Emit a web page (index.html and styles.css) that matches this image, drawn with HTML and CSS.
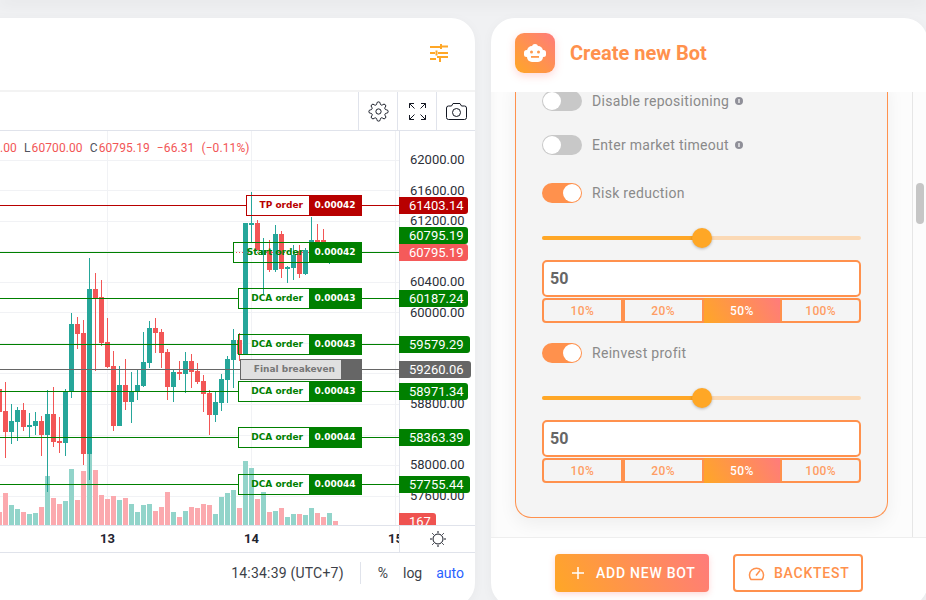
FILE: index.html
```html
<!DOCTYPE html>
<html lang="en">
<head>
    <meta charset="UTF-8">
    <meta name="viewport" content="width=device-width, initial-scale=1.0">
    <title>Create new Bot</title>
    <link rel="stylesheet" href="styles.css">
</head>
<body>

    <div class="topbar"></div>

    <div class="layout">

        <!-- Chart card -->
        <section class="card chart-card">
            <header class="chart-head">
                <svg class="tune-icon" width="18" height="18" viewBox="0 0 18 18" fill="none" stroke="#ffa726" stroke-width="2">
                    <path d="M0 3h10M11 0v5M11 2.5h7M0 9h5M6.5 6.5v5M8 9h10M0 15h6M7 13h11M10 13v5"/>
                </svg>
            </header>

            <div class="toolbar">
                <button class="tool">
                    <svg width="21" height="21" viewBox="0 0 24 24" fill="none" stroke="#131722" stroke-width="1.1">
                        <circle cx="12" cy="12" r="3"/>
                        <path d="M19.4 15a1.65 1.65 0 0 0 .33 1.82l.06.06a2 2 0 0 1 0 2.83 2 2 0 0 1-2.83 0l-.06-.06a1.65 1.65 0 0 0-1.82-.33 1.65 1.65 0 0 0-1 1.51V21a2 2 0 0 1-2 2 2 2 0 0 1-2-2v-.09A1.65 1.65 0 0 0 9 19.4a1.65 1.65 0 0 0-1.82.33l-.06.06a2 2 0 0 1-2.83 0 2 2 0 0 1 0-2.83l.06-.06a1.65 1.65 0 0 0 .33-1.82 1.65 1.65 0 0 0-1.51-1H3a2 2 0 0 1-2-2 2 2 0 0 1 2-2h.09A1.65 1.65 0 0 0 4.6 9a1.65 1.65 0 0 0-.33-1.82l-.06-.06a2 2 0 0 1 0-2.83 2 2 0 0 1 2.83 0l.06.06a1.65 1.65 0 0 0 1.82.33H9a1.65 1.65 0 0 0 1-1.51V3a2 2 0 0 1 2-2 2 2 0 0 1 2 2v.09a1.65 1.65 0 0 0 1 1.51 1.65 1.65 0 0 0 1.82-.33l.06-.06a2 2 0 0 1 2.83 0 2 2 0 0 1 0 2.83l-.06.06a1.65 1.65 0 0 0-.33 1.82V9a1.65 1.65 0 0 0 1.51 1H21a2 2 0 0 1 2 2 2 2 0 0 1-2 2h-.09a1.65 1.65 0 0 0-1.51 1z"/>
                    </svg>
                </button>
                <button class="tool">
                    <svg width="17" height="17" viewBox="0 0 17 17" fill="none" stroke="#131722">
                        <path d="M.5 5V.5H5M.5.5L5.5 5.5M16.5 5V.5H12M16.5.5L11.5 5.5M.5 12v4.5H5M.5 16.5L5.5 11.5M16.5 12v4.5H12M16.5 16.5L11.5 11.5"/>
                    </svg>
                </button>
                <button class="tool">
                    <svg width="21" height="17" viewBox="0 0 21 17" fill="none" stroke="#131722">
                        <path d="M.5 5a2 2 0 0 1 2-2h3L7 .5h7L15.500 3h3a2 2 0 0 1 2 2v9.500a2 2 0 0 1-2 2h-16a2 2 0 0 1-2-2z"/>
                        <circle cx="10.500" cy="9.500" r="4"/>
                    </svg>
                </button>
            </div>

            <div class="chart">
                <svg class="plot" width="399" height="394" viewBox="0 131 399 394" fill="none">
                    <path class="grid" d="M0 160.500H399M0 190.500H399M0 221.500H399M0 251.500H399M0 282.500H399M0 312.500H399M0 343.500H399M0 373.500H399M0 404.500H399M0 435.500H399M0 465.500H399M0 496.500H399M107.500 131V525M251.500 131V525M395.500 131V525"/>
                    <path class="price-now" d="M233 252.500H399"/>
                    <!-- volume -->
                    <path class="vol vol-up" d="M11.500 505V525M17.500 509V525M29.500 514V525M35.500 513V525M47.500 476V525M65.500 501V525M71.500 469V525M89.500 454V525M119.500 500V525M131.500 504V525M137.500 512V525M143.500 505V525M149.500 504V525M173.500 512V525M185.500 511V525M215.500 514V525M221.500 497V525M227.500 493V525M233.500 490V525M245.500 461V525M251.500 468V525M263.500 492V525M275.500 511V525M287.500 517V525M293.500 514V525M305.500 515V525M311.500 508V525M329.500 513V525"/>
                    <path class="vol vol-down" d="M-.5 512V525M5.500 493V525M23.500 512V525M41.500 507V525M53.500 498V525M59.500 504V525M77.500 500V525M83.500 471V525M95.500 470V525M101.500 495V525M107.500 499V525M113.500 496V525M125.500 498V525M155.500 511V525M161.500 507V525M167.500 492V525M179.500 517V525M191.500 507V525M197.500 508V525M203.500 504V525M209.500 505V525M239.500 508V525M257.500 499V525M269.500 512V525M281.500 508V525M299.500 514V525M317.500 513V525M323.500 517V525M335.500 521V525"/>
                    <!-- wicks -->
                    <path class="wick wick-up" d="M11.500 404V444M17.500 407V441M29.500 413V437M35.500 412V435M47.500 390V492M65.500 389V456M71.500 313V398M89.500 258V480M119.500 366V426M131.500 372V423M137.500 370V400M143.500 332V387M149.500 321V368M173.500 369V402M185.500 352V393M215.500 392V422M221.500 374V411M227.500 356V403M233.500 329V388M251.500 192V243M263.500 238V295M275.500 225V272M287.500 266V283M293.500 245V280M305.500 248V275M311.500 217V253M329.500 255V264"/>
                    <path class="wick wick-down" d="M-.5 380V400M5.500 382V458M23.500 403V431M41.500 416V456M53.500 387V447M59.500 417V453M77.500 317V349M83.500 320V465M95.500 273V371M101.500 280V346M107.500 318V368M113.500 351V431M125.500 359V410M155.500 318V353M161.500 329V368M167.500 349V400M179.500 361V380M191.500 354V388M197.500 363V384M203.500 375V412M209.500 390V435M239.500 333V361M257.500 220V250M269.500 240V272M281.500 231V278M299.500 245V278M317.500 224V260M323.500 229V263"/>
                    <!-- bodies -->
                    <path class="body body-up" d="M11.500 421V432M17.500 410V422M29.500 425V427M35.500 421V426M47.500 414V435M65.500 392V443M71.500 324V391M89.500 289V454M119.500 385V426M131.500 392V402M137.500 385V392M143.500 362V386M149.500 328V363M173.500 372V387M185.500 361V374M215.500 402V415M221.500 379V403M227.500 359V380M233.500 340V360M245.500 223V354M251.500 223V225M263.500 250V255M275.500 234V270M287.500 267V269M293.500 255V268M305.500 250V274M311.500 240V253"/>
                    <path class="body body-down" d="M-.5 389V412M5.500 411V432M23.500 410V427M41.500 421V435M53.500 414V442M59.500 441V443M77.500 324V334M83.500 333V454M95.500 289V298M101.500 297V343M107.500 342V367M113.500 366V426M125.500 385V402M155.500 328V333M161.500 332V353M167.500 352V387M179.500 372V374M191.500 361V372M197.500 371V382M203.500 381V394M209.500 393V415M239.500 340V354M257.500 223V250M269.500 250V270M281.500 234V269M299.500 251V274M317.500 240V242M323.500 240V252"/>
                </svg>

                <div class="legend">
                    <span class="down">.00</span>
                    <span><i>L</i><span class="down">60700.00</span></span>
                    <span><i>C</i><span class="down">60795.19</span></span>
                    <span class="down">−66.31</span>
                    <span class="down">(−0.11%)</span>
                </div>

                <div class="price-axis">
                    <span>62000.00</span>
                    <span>61600.00</span>
                    <span>61200.00</span>
                    <span>60800.00</span>
                    <span>60400.00</span>
                    <span>60000.00</span>
                    <span>59600.00</span>
                    <span>59200.00</span>
                    <span>58800.00</span>
                    <span>58400.00</span>
                    <span>58000.00</span>
                    <span>57600.00</span>
                </div>

                <!-- top is the y of each price level -->
                <div class="level" style="top:64px">
                    <span class="wire wire-red"></span>
                    <div class="order order-tp"><span class="order-name">TP order</span><span class="order-qty">0.00042</span></div>
                    <span class="wire wire-end wire-red"></span>
                    <div class="slot"><span class="tag tag-red">61403.14</span></div>
                </div>
                <div class="level" style="top:111px">
                    <span class="wire"></span>
                    <div class="order order-start"><span class="order-name">Start order</span><span class="order-qty">0.00042</span></div>
                    <span class="wire wire-end"></span>
                    <div class="slot"><span class="tag tag-now">60795.19</span></div>
                </div>
                <div class="level" style="top:157px">
                    <span class="wire"></span>
                    <div class="order"><span class="order-name">DCA order</span><span class="order-qty">0.00043</span></div>
                    <span class="wire wire-end"></span>
                    <div class="slot"><span class="tag">60187.24</span></div>
                </div>
                <div class="level" style="top:203px">
                    <span class="wire"></span>
                    <div class="order"><span class="order-name">DCA order</span><span class="order-qty">0.00043</span></div>
                    <span class="wire wire-end"></span>
                    <div class="slot"><span class="tag tag-wide">59579.29</span></div>
                </div>
                <div class="level" style="top:228px">
                    <span class="wire wire-grey"></span>
                    <div class="order order-even"><span class="order-name">Final breakeven</span><span class="order-qty"></span></div>
                    <span class="wire wire-end wire-grey"></span>
                    <div class="slot"><span class="tag tag-grey">59260.06</span></div>
                </div>
                <div class="level" style="top:250px">
                    <span class="wire"></span>
                    <div class="order"><span class="order-name">DCA order</span><span class="order-qty">0.00043</span></div>
                    <span class="wire wire-end"></span>
                    <div class="slot"><span class="tag">58971.34</span></div>
                </div>
                <div class="level" style="top:296px">
                    <span class="wire"></span>
                    <div class="order"><span class="order-name">DCA order</span><span class="order-qty">0.00044</span></div>
                    <span class="wire wire-end"></span>
                    <div class="slot"><span class="tag tag-wide">58363.39</span></div>
                </div>
                <div class="level" style="top:343px">
                    <span class="wire"></span>
                    <div class="order"><span class="order-name">DCA order</span><span class="order-qty">0.00044</span></div>
                    <span class="wire wire-end"></span>
                    <div class="slot"><span class="tag tag-wide">57755.44</span></div>
                </div>

                <span class="tag tag-last">60795.19</span>
                <div class="tag-volume"><span>167</span></div>
            </div>

            <div class="time-axis">
                <span class="day day-13">13</span>
                <span class="day day-14">14</span>
                <span class="day day-15">15</span>
                <div class="theme">
                    <svg width="16" height="16" viewBox="0 0 16 16" fill="none" stroke="#131722">
                        <circle cx="8" cy="8" r="5"/>
                        <path d="M8 0v2M8 14v2M0 8h2M14 8h2M2.300 2.300l1.400 1.400M12.300 12.300l1.400 1.400M13.700 2.300l-1.400 1.400M3.700 12.300l-1.400 1.400"/>
                    </svg>
                </div>
            </div>

            <footer class="chart-foot">
                <span class="clock">14:34:39 (UTC+7)</span>
                <span class="foot-sep"></span>
                <span class="foot-opt foot-pct">%</span>
                <span class="foot-opt">log</span>
                <span class="foot-opt foot-auto">auto</span>
            </footer>
        </section>

        <!-- Bot form -->
        <section class="card bot-card">
            <header class="bot-head">
                <div class="bot-logo">
                    <svg width="22" height="18" viewBox="0 0 22 18">
                        <circle cx="11" cy="3" r="3" fill="#fff"/>
                        <rect x="3" y="2" width="16" height="16" rx="5" fill="#fff"/>
                        <rect y="6" width="5" height="7" rx="2.500" fill="#fff"/>
                        <rect x="17" y="6" width="5" height="7" rx="2.500" fill="#fff"/>
                        <circle cx="7.500" cy="8" r="1.500" fill="#ff9a4d"/>
                        <circle cx="14.500" cy="8" r="1.500" fill="#ff9a4d"/>
                        <rect x="7" y="12" width="8" height="1.800" fill="#ff9a4d"/>
                    </svg>
                </div>
                <h2>Create new Bot</h2>
            </header>

            <div class="bot-body">
                <div class="bot-scroll">
                    <div class="panel">
                        <div class="switch-row">
                            <span class="switch"></span>
                            <label>Disable repositioning</label>
                            <svg class="info" width="8" height="8" viewBox="0 0 8 8"><circle cx="4" cy="4" r="4" fill="#8f8f98"/><path d="M4 2v4" stroke="#fff" stroke-width="1.200"/></svg>
                        </div>
                        <div class="switch-row switch-second">
                            <span class="switch"></span>
                            <label>Enter market timeout</label>
                            <svg class="info" width="8" height="8" viewBox="0 0 8 8"><circle cx="4" cy="4" r="4" fill="#8f8f98"/><path d="M4 2v4" stroke="#fff" stroke-width="1.200"/></svg>
                        </div>

                        <div class="switch-row switch-third">
                            <span class="switch on"></span>
                            <label>Risk reduction</label>
                        </div>
                        <div class="slider"><span class="slider-fill"></span><span class="slider-thumb"></span></div>
                        <input class="amount" type="text" value="50">
                        <div class="segments">
                            <button class="seg">10%</button>
                            <button class="seg">20%</button>
                            <button class="seg active">50%</button>
                            <button class="seg">100%</button>
                        </div>

                        <div class="switch-row switch-next">
                            <span class="switch on"></span>
                            <label>Reinvest profit</label>
                        </div>
                        <div class="slider"><span class="slider-fill"></span><span class="slider-thumb"></span></div>
                        <input class="amount" type="text" value="50">
                        <div class="segments">
                            <button class="seg">10%</button>
                            <button class="seg">20%</button>
                            <button class="seg active">50%</button>
                            <button class="seg">100%</button>
                        </div>
                    </div>
                </div>
                <div class="scrollbar"><span class="scroll-thumb"></span></div>
            </div>

            <footer class="bot-foot">
                <button class="btn btn-add">
                    <svg width="12" height="12" viewBox="0 0 12 12" stroke="#fff" stroke-width="1.500"><path d="M6 0v12M0 6h12"/></svg>
                    ADD NEW BOT
                </button>
                <button class="btn btn-test">
                    <svg width="17" height="15" viewBox="0 0 17 15" fill="none" stroke="#ff914d" stroke-width="1.500"><path d="M3 13.500a7 7 0 1 1 11 0zM8 9.500l4-5"/></svg>
                    BACKTEST
                </button>
            </footer>
        </section>

    </div>

</body>
</html>
```

FILE: styles.css
```css
/* General styles */
* {
    box-sizing: border-box;
}

body {
    font-family: Roboto, "Liberation Sans", sans-serif;
    margin: 0;
    height: 600px;
    overflow: hidden;
    background-color: #f0f1f3;
}

button {
    font-family: inherit;
    cursor: pointer;
}

.topbar {
    height: 0;
    box-shadow: 0 0 16px 2px rgba(0, 0, 0, 0.12);
}

.layout {
    display: flex;
    gap: 16px;
    padding-top: 18px;
    width: 952px;
    margin-left: -24px;
}

.card {
    height: 589px;
    background-color: #fff;
    border-radius: 24px;
    overflow: hidden;
    box-shadow: 0 2px 12px rgba(0, 0, 0, 0.04);
}

/* Chart card */
.chart-card {
    width: 499px;
    padding-left: 24px;
    flex-shrink: 0;
}

.chart-head {
    height: 74px;
    border-bottom: 2px solid #f3f3f3;
    display: flex;
    align-items: center;
    justify-content: flex-end;
    padding: 0 27px 2px 0;
}

.toolbar {
    height: 39px;
    border-bottom: 1px solid #e0e3eb;
    display: flex;
    justify-content: flex-end;
}

.tool {
    width: 39px;
    padding: 0;
    border: none;
    border-left: 1px solid #e0e3eb;
    background: none;
    display: flex;
    align-items: center;
    justify-content: center;
}

.tool:first-child {
    width: 39px;
}

.tool:last-child {
    width: 39px;
}

.chart {
    position: relative;
    height: 394px;
    width: 475px;
    overflow: hidden;
}

.plot {
    position: absolute;
    left: 0;
    top: 0;
    overflow: hidden;
}

.grid {
    stroke: #f1f2f5;
}

.price-now {
    stroke: #ef5350;
    stroke-dasharray: 1 2;
}

.vol {
    stroke-width: 5;
}

.vol-up {
    stroke: #92d4ca;
}

.vol-down {
    stroke: #fba9ae;
}

.wick {
    stroke-width: 1;
}

.body {
    stroke-width: 5;
}

.wick-up,
.body-up {
    stroke: #26a69a;
}

.wick-down,
.body-down {
    stroke: #f25656;
}

.legend {
    position: absolute;
    left: 0;
    top: 10px;
    display: flex;
    gap: 7px;
    font-size: 12px;
    letter-spacing: 0.1px;
    line-height: 15px;
    white-space: nowrap;
}

.legend i {
    font-style: normal;
    color: #50535e;
    margin-right: 1px;
}

.down {
    color: #f25656;
}

.price-axis {
    position: absolute;
    left: 399px;
    top: 14px;
    width: 76px;
    height: 380px;
    border-left: 1px solid #e0e3eb;
    padding-left: 10px;
    display: flex;
    flex-direction: column;
    font-size: 13px;
    color: #2c2f38;
    background: transparent;
}

.price-axis span {
    height: 30.550px;
    line-height: 30.550px;
    flex-shrink: 0;
}

.chart::after {
    content: "";
    position: absolute;
    left: 399px;
    top: 0;
    height: 14px;
    width: 1px;
    background-color: #e0e3eb;
}

/* Price levels */
.level {
    position: absolute;
    left: 0;
    width: 475px;
    height: 21px;
    display: flex;
    align-items: center;
}

.wire {
    flex: 1;
    height: 1px;
    background-color: #008000;
}

.wire-end {
    flex: none;
    width: 37px;
}

.wire-red {
    background-color: #b80000;
}

.wire-grey {
    background-color: #666;
}

.order {
    width: 124px;
    height: 21px;
    display: flex;
    border: 1px solid #008000;
    font-family: "DejaVu Sans", sans-serif;
    font-size: 9px;
    font-weight: bold;
    color: #008000;
    line-height: 19px;
}

.order-tp {
    width: 116px;
    border-color: #b80000;
    color: #b80000;
}

.order-start {
    width: 129px;
}

.order-even {
    width: 122px;
    border-color: #666;
    color: #777;
    background-color: #e0e0e0;
}

.order-name {
    flex: 1;
    text-align: right;
    padding-right: 6px;
}

.order-qty {
    width: 52px;
    text-align: center;
    color: #fff;
    background-color: #008000;
}

.order-tp .order-qty {
    background-color: #b80000;
}

.order-even .order-qty {
    width: 20px;
    background-color: #666;
}

.slot {
    width: 76px;
    flex-shrink: 0;
}

.tag {
    display: block;
    width: 69px;
    height: 17px;
    padding-left: 10px;
    background-color: #008000;
    border-radius: 0 3px 3px 0;
    color: #fff;
    font-size: 13px;
    line-height: 17px;
}

.tag-wide {
    width: 71px;
}

.tag-red {
    background-color: #b80000;
}

.tag-grey {
    width: 72px;
    background-color: #666;
}

.tag-now {
    background-color: #f55a5a;
}

.tag-last {
    position: absolute;
    left: 399px;
    top: 96px;
}

.tag-volume {
    position: absolute;
    left: 399px;
    top: 382px;
    width: 37px;
    height: 12px;
    overflow: hidden;
    background-color: #ef5350;
    border-radius: 0 3px 0 0;
    padding-left: 10px;
    color: #fff;
    font-size: 13px;
    line-height: 17px;
}

.time-axis {
    position: relative;
    height: 28px;
    width: 475px;
    border-top: 1px solid #e0e3eb;
    border-bottom: 1px solid #e0e3eb;
    font-size: 13px;
    font-weight: bold;
    color: #1f2430;
    line-height: 26px;
    overflow: hidden;
}

.day {
    position: absolute;
    top: 0;
}

.day-13 {
    left: 100px;
}

.day-14 {
    left: 244px;
}

.day-15 {
    left: 388px;
}

.theme {
    position: absolute;
    left: 399px;
    top: 0;
    width: 76px;
    height: 26px;
    background-color: #fff;
    border-left: 1px solid #e0e3eb;
    display: flex;
    align-items: center;
    justify-content: center;
}

.chart-foot {
    width: 475px;
    height: 40px;
    display: flex;
    align-items: center;
    justify-content: flex-end;
    padding: 0 11px 0 0;
    font-size: 14px;
    color: #3c3f48;
}

.clock {
    letter-spacing: 0.2px;
}

.foot-sep {
    width: 1px;
    height: 22px;
    margin: 0 17px 0 16px;
    background-color: #e0e3eb;
}

.foot-pct {
    margin-right: 15px;
}

.foot-auto {
    margin-left: 14px;
    color: #2962ff;
}

/* Bot card */
.bot-card {
    width: 437px;
    flex-shrink: 0;
}

.bot-head {
    height: 72px;
    display: flex;
    align-items: center;
    gap: 15px;
    padding-left: 24px;
    border-bottom: 2px solid #fff;
}

.bot-head {
    height: 74px;
    padding-bottom: 2px;
}

.bot-logo {
    width: 40px;
    height: 40px;
    border-radius: 9px;
    background: linear-gradient(45deg, #ffa726, #ff7b7b);
    box-shadow: 0 3px 8px rgba(255, 123, 123, 0.3);
    display: flex;
    align-items: center;
    justify-content: center;
}

.bot-head h2 {
    margin: 0;
    font-size: 20px;
    font-weight: bold;
    color: #ff914d;
}

.bot-body {
    height: 445px;
    display: flex;
    background-color: #fcfcfc;
    box-shadow: inset 8px 0 10px -8px rgba(0, 0, 0, 0.04);
}

.bot-scroll {
    flex: 1;
    overflow: hidden;
    padding-left: 24px;
}

.panel {
    width: 373px;
    margin-top: -11px;
    padding: 10px 26px 34px;
    background-color: #f4f4f4;
    border: 1px solid #ff914d;
    border-top: none;
    border-radius: 0 0 16px 16px;
    box-shadow: 0 6px 18px rgba(0, 0, 0, 0.06);
}

.switch-row {
    display: flex;
    align-items: center;
    height: 20px;
    font-size: 14px;
    letter-spacing: 0.3px;
    color: #8a8a8a;
}

.switch-second {
    margin-top: 24px;
}

.switch-third {
    margin-top: 28px;
}

.switch-next {
    margin-top: 20px;
}

.switch {
    position: relative;
    width: 40px;
    height: 20px;
    margin-right: 10px;
    border-radius: 10px;
    background-color: #c8c8c8;
}

.switch::after {
    content: "";
    position: absolute;
    left: 1px;
    top: 1px;
    width: 18px;
    height: 18px;
    border-radius: 50%;
    background-color: #fff;
}

.switch.on {
    background-color: #ff914d;
}

.switch.on::after {
    left: 21px;
}

.info {
    margin-left: 6px;
}

.slider {
    position: relative;
    height: 20px;
    margin-top: 25px;
    display: flex;
    align-items: center;
}

.slider::before {
    content: "";
    width: 100%;
    height: 4px;
    border-radius: 2px;
    background-color: #fbd9b5;
}

.slider-fill {
    position: absolute;
    left: 0;
    top: 8px;
    width: 160px;
    height: 4px;
    border-radius: 2px;
    background-color: #ffa726;
}

.slider-thumb {
    position: absolute;
    left: 150px;
    top: 0;
    width: 20px;
    height: 20px;
    border-radius: 50%;
    background-color: #ffa726;
    box-shadow: 0 1px 3px rgba(0, 0, 0, 0.25);
}

.amount {
    display: block;
    width: 100%;
    height: 37px;
    margin-top: 12px;
    padding: 0 0 0 6px;
    border: 2px solid #ff914d;
    border-radius: 5px;
    background-color: #fff;
    font-family: inherit;
    font-size: 16px;
    font-weight: bold;
    color: #666;
    outline: none;
}

.segments {
    display: flex;
    margin-top: 1px;
    height: 25px;
}

.seg {
    flex: 1;
    padding: 0;
    border: 2px solid #ff914d;
    border-radius: 0;
    background: none;
    font-size: 12px;
    font-weight: 500;
    letter-spacing: 0.4px;
    color: #ff9d63;
}

.seg:first-child {
    border-radius: 4px 0 0 4px;
}

.seg:last-child {
    border-radius: 0 4px 4px 0;
}

.seg.active {
    border: none;
    background: linear-gradient(60deg, #ffa726, #ff7b7b);
    color: #fff;
}

.scrollbar {
    width: 16px;
    flex-shrink: 0;
    border-left: 1px solid #e6e6e6;
    padding: 91px 0 0 3px;
}

.scroll-thumb {
    display: block;
    width: 8px;
    height: 41px;
    border-radius: 4px;
    background-color: #c6c6c6;
}

.bot-foot {
    height: 70px;
    border-top: 1px solid #eee;
    display: flex;
    align-items: flex-start;
    gap: 24px;
    padding: 16px 0 0 64px;
}

.btn {
    height: 38px;
    display: flex;
    align-items: center;
    border-radius: 4px;
    font-size: 14px;
    font-weight: 500;
    letter-spacing: 0.75px;
}

.btn-add {
    width: 154px;
    padding: 0 0 0 17px;
    gap: 12px;
    border: none;
    color: #fff;
    background: linear-gradient(60deg, #ffa726, #ff7b7b);
    box-shadow: 0 2px 6px rgba(255, 123, 123, 0.3);
}

.btn-test {
    width: 130px;
    padding: 0 0 0 13px;
    gap: 9px;
    border: 2px solid #ff914d;
    color: #ff914d;
    background-color: #fff;
}
```
